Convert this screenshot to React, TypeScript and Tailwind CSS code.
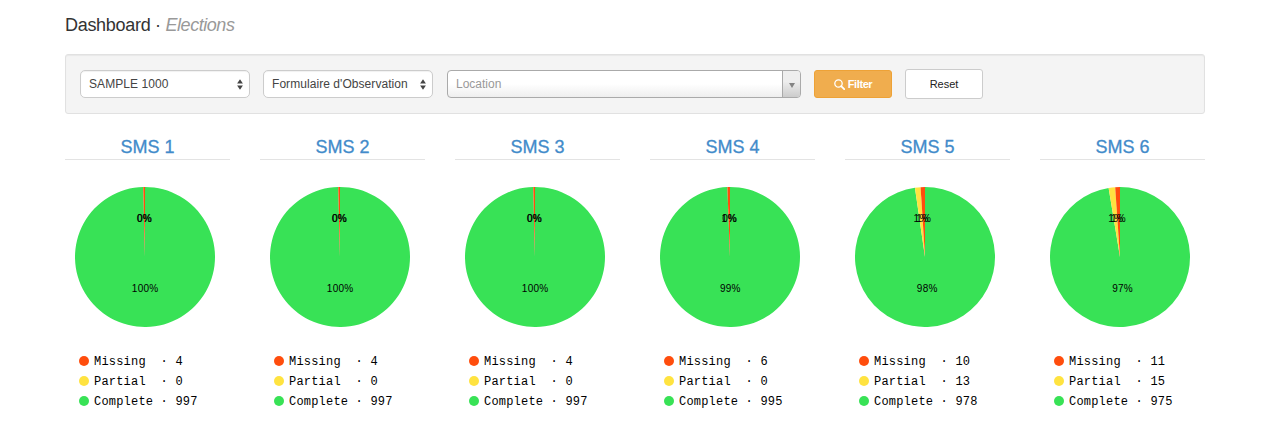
import React from "react";

type Stage = { name: string; missing: number; partial: number; complete: number };

const COLORS = { missing: "#ff4d0d", partial: "#ffe340", complete: "#38e256" };

const STAGES: Stage[] = [
  { name: "SMS 1", missing: 4, partial: 0, complete: 997 },
  { name: "SMS 2", missing: 4, partial: 0, complete: 997 },
  { name: "SMS 3", missing: 4, partial: 0, complete: 997 },
  { name: "SMS 4", missing: 6, partial: 0, complete: 995 },
  { name: "SMS 5", missing: 10, partial: 13, complete: 978 },
  { name: "SMS 6", missing: 11, partial: 15, complete: 975 },
];

const RADIUS = 70;

function point(angle: number, r: number) {
  return [Math.sin(angle) * r, -Math.cos(angle) * r];
}

function Pie({ stage }: { stage: Stage }) {
  const total = stage.missing + stage.partial + stage.complete;
  const slices = (["missing", "partial", "complete"] as const)
    .map((key) => ({ key, value: stage[key] }))
    .sort((a, b) => b.value - a.value);
  let angle = 0;
  const arcs = slices.map(({ key, value }) => {
    const start = angle;
    angle += (value / total) * Math.PI * 2;
    const [x0, y0] = point(start, RADIUS);
    const [x1, y1] = point(angle, RADIUS);
    const [cx, cy] = point((start + angle) / 2, RADIUS / 2);
    const large = angle - start > Math.PI ? 1 : 0;
    return {
      key,
      cx,
      cy,
      d: `M${x0},${y0}A${RADIUS},${RADIUS} 0 ${large},1 ${x1},${y1}L0,0Z`,
      label: `${Math.floor((value / total) * 100 + 0.5)}%`,
    };
  });
  return (
    <svg className="mt-[27px] ml-[10px] block" width="140" height="140" viewBox="-70 -70 140 140">
      {arcs.map((a) => (
        <path key={a.key} d={a.d} fill={COLORS[a.key]} />
      ))}
      {arcs.map((a) => (
        <text key={a.key} x={a.cx - 0.3} y={a.cy} textAnchor="middle" fontSize="10" letterSpacing="0.25" fill="#000">
          {a.label}
        </text>
      ))}
    </svg>
  );
}

function LegendRow({ color, label, value }: { color: string; label: string; value: number }) {
  return (
    <li className="flex h-5 items-center">
      <svg width="10" height="10" className="mr-[5px] shrink-0">
        <circle cx="5" cy="5" r="5" fill={color} />
      </svg>
      <span className="pt-[2px] whitespace-pre">{`${label.padEnd(8)} · ${value}`}</span>
    </li>
  );
}

function StagePanel({ stage }: { stage: Stage }) {
  return (
    <section>
      <h4 className="h-[27px] border-b border-[#e3e3e3] text-center text-[18px] leading-[28px] text-[#428bca] [-webkit-text-stroke:0.3px_#428bca]">
        {stage.name}
      </h4>
      <Pie stage={stage} />
      <ul className="mt-[24px] ml-[14px] font-['Liberation_Mono',monospace] text-[12px] leading-5 tracking-[0.2px] text-black">
        <LegendRow color={COLORS.missing} label="Missing" value={stage.missing} />
        <LegendRow color={COLORS.partial} label="Partial" value={stage.partial} />
        <LegendRow color={COLORS.complete} label="Complete" value={stage.complete} />
      </ul>
    </section>
  );
}

function Select({ value }: { value: string }) {
  return (
    <div className="mr-[13px] flex h-7 w-[170px] items-center justify-between rounded-[5px] border border-[#ccc] bg-white pr-[6px] pl-2 text-[12px] text-[#444] shadow-[inset_0_1px_1px_rgba(0,0,0,0.06)]">
      <span className="tracking-[0.06px] whitespace-nowrap">{value}</span>
      <svg width="6" height="11" viewBox="0 0 6 11" fill="#444" className="shrink-0">
        <path d="M3 0.3L5.9 4.4H0.1ZM3 10.7L5.9 6.6H0.1Z" />
      </svg>
    </div>
  );
}

export default function App() {
  return (
    <main className="h-[444px] overflow-hidden bg-white px-[65px] font-['Liberation_Sans',Arial,sans-serif]">
      <h1 className="h-[54px] pt-[12px] text-[18px] leading-[26px] tracking-[-0.3px] text-[#333]">
        Dashboard · <em className="tracking-[-0.45px] text-[#999]">Elections</em>
      </h1>
      <form className="flex h-[60px] items-center rounded-[3px] border border-[#e1e1e1] bg-[#f4f4f4] px-[14px] shadow-[inset_0_1px_1px_rgba(0,0,0,0.05)]">
        <Select value="SAMPLE 1000" />
        <Select value="Formulaire d'Observation" />
        <div className="mr-[13px] ml-px flex h-7 w-[354px] overflow-hidden rounded-[4px] border border-[#aaa] bg-linear-to-b from-white from-50% to-[#eee] text-[12px] text-[#999]">
          <span className="flex-1 pl-2 leading-[26px]">Location</span>
          <span className="flex w-[18px] items-center justify-center border-l border-[#aaa] bg-linear-to-b from-[#eee] from-40% to-[#ccc]">
            <svg width="6" height="5" viewBox="0 0 6 5" className="mt-[3px]">
              <path d="M0 0H6L3 5Z" fill="#848484" />
            </svg>
          </span>
        </div>
        <button type="button" className="mr-[13px] flex h-7 w-[78px] items-center justify-center gap-[3px] rounded-[3px] border border-[#eea236] bg-[#f0ad4e] text-[11px] font-bold tracking-[-0.4px] text-white">
          <svg width="11" height="11" viewBox="0 0 11 11" fill="none" stroke="#fff">
            <circle cx="4.5" cy="4.5" r="3.7" strokeWidth="1.3" />
            <path d="M7.2 7.2L10.2 10.2" strokeWidth="1.8" strokeLinecap="round" />
          </svg>
          Filter
        </button>
        <button type="button" className="h-[30px] w-[78px] rounded-[3px] border border-[#ccc] bg-white text-[11px] text-[#222]">
          Reset
        </button>
      </form>
      <div className="mt-[19px] grid grid-cols-6 gap-[30px]">
        {STAGES.map((stage) => (
          <StagePanel key={stage.name} stage={stage} />
        ))}
      </div>
    </main>
  );
}
